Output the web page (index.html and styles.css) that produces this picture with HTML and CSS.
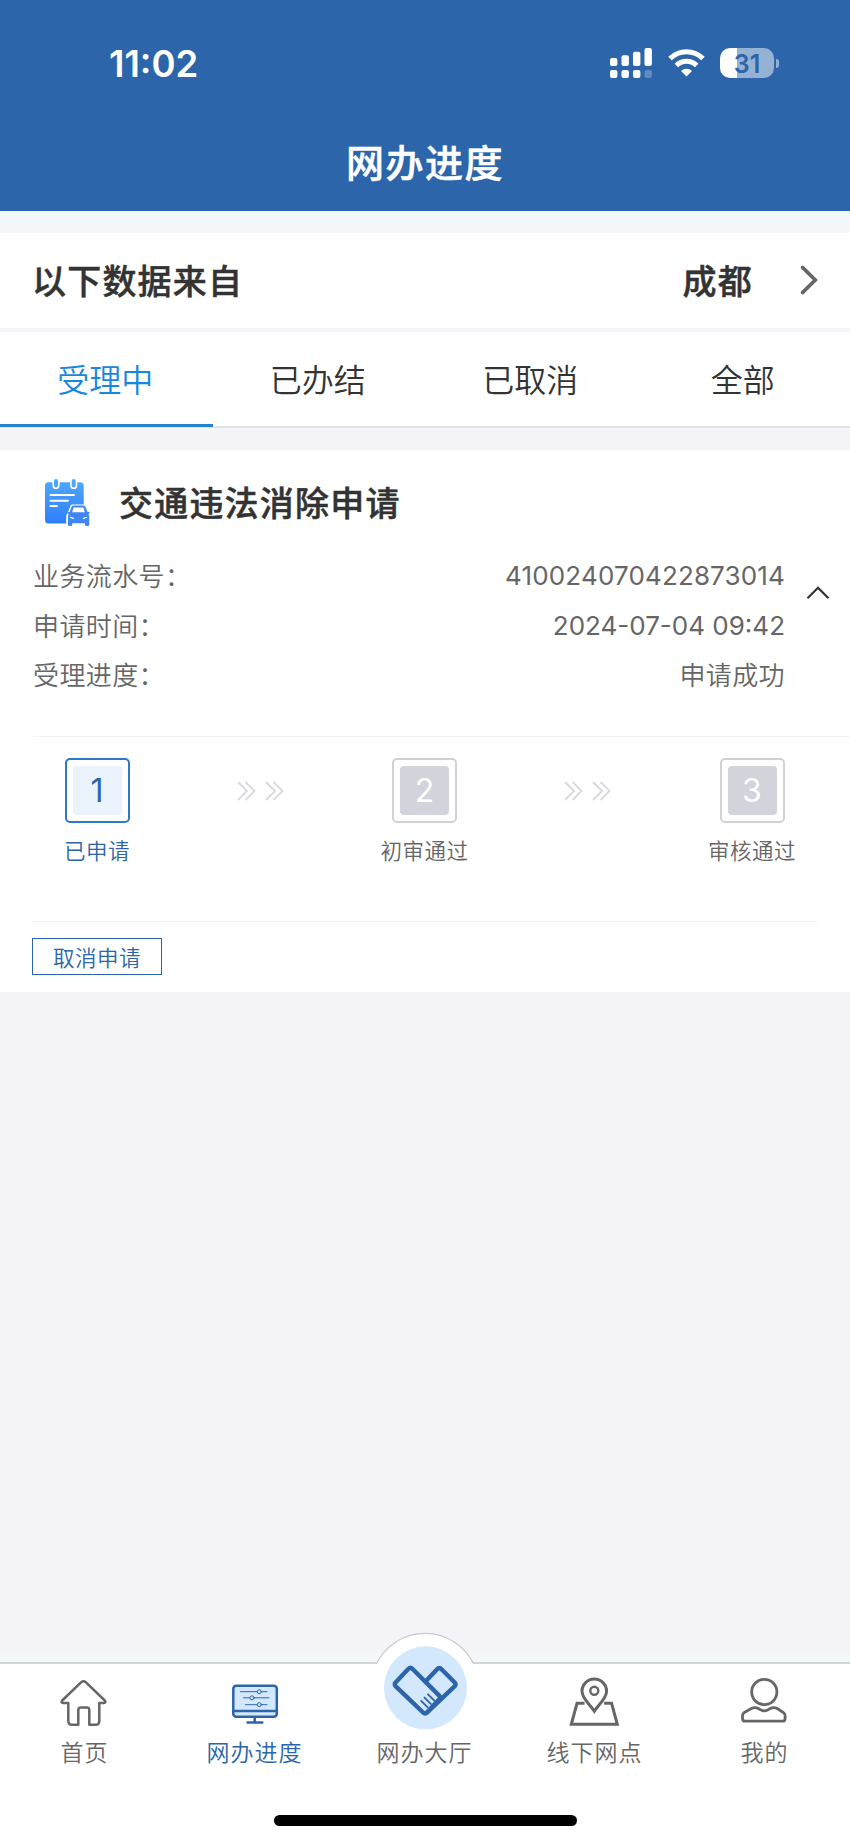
FILE: index.html
```html
<!DOCTYPE html>
<html lang="zh-CN">

<head>
    <meta charset="UTF-8">
    <meta name="viewport" content="width=device-width, initial-scale=1.0">
    <title>网办进度</title>
    <link rel="stylesheet" href="styles.css">
</head>

<body>
    <div class="app">
        <header class="header">
            <div class="status-bar">
                <span class="time">11:02</span>
                <div class="status-icons">
                    <svg class="signal" width="43" height="30" viewBox="0 0 43 30" fill="#fff">
                        <rect x="0" y="10" width="7.4" height="8" rx="2" />
                        <rect x="11.5" y="7.3" width="7.4" height="10.7" rx="2" />
                        <rect x="23" y="3.7" width="7.4" height="14.3" rx="2" />
                        <rect x="34.5" y="0" width="7.4" height="18" rx="2" />
                        <rect x="0" y="22" width="7.4" height="8" rx="2" />
                        <rect x="11.5" y="22" width="7.4" height="8" rx="2" />
                        <rect x="23" y="22" width="7.4" height="8" rx="2" />
                        <rect x="34.5" y="22" width="7.4" height="8" rx="2" opacity=".25" />
                    </svg>
                    <svg class="wifi" width="37" height="30" viewBox="0 0 37 30">
                        <g fill="none" stroke="#fff" stroke-width="5">
                            <path d="M2 10.6a23.4 23.4 0 0 1 33 0" />
                            <path d="M8.3 17.4a14.4 14.4 0 0 1 20.4 0" />
                        </g>
                        <path d="M13 22.9a8 8 0 0 1 11 0l-5.5 5.5z" fill="#fff" />
                    </svg>
                    <div class="battery"><span>31</span></div>
                    <div class="battery-tip"></div>
                </div>
            </div>
            <h1 class="page-title">网办进度</h1>
        </header>

        <div class="source">
            <span>以下数据来自</span>
            <span class="city">成都</span>
            <svg width="20" height="32" viewBox="0 0 20 32" fill="none" stroke="#666" stroke-width="3.6" stroke-linecap="round">
                <path d="M3.500 3.400L16.300 16 3.500 28.600" />
            </svg>
        </div>

        <nav class="tabs">
            <div class="tab active">受理中</div>
            <div class="tab">已办结</div>
            <div class="tab">已取消</div>
            <div class="tab">全部</div>
        </nav>

        <main class="content">
            <section class="card">
                <div class="card-title">
                    <svg width="56" height="56" viewBox="0 0 56 56">
                        <defs>
                            <linearGradient id="doc" x1="0" y1="0" x2="0" y2="1">
                                <stop offset="0" stop-color="#4ea6fb" />
                                <stop offset="1" stop-color="#2f7dfa" />
                            </linearGradient>
                        </defs>
                        <rect x="5" y="8.3" width="38.7" height="41.2" rx="3.5" fill="url(#doc)" />
                        <g fill="#4ea6fb" stroke="#fff" stroke-width="1.6">
                            <rect x="13.2" y="4.2" width="5.6" height="10" rx="2.8" />
                            <rect x="30.9" y="4.2" width="5.6" height="10" rx="2.8" />
                        </g>
                        <path d="M10.5 21H34M10.5 26.7H28M10.5 32H17" stroke="#fff" stroke-width="2" stroke-linecap="round" />
                        <path d="M32 31.800h13l3.500 7 1.500 3v9.700H27.500v-9.700l1.500-3z" fill="#fff" stroke="#fff" stroke-width="2.600" stroke-linejoin="round" />
                        <path d="M31.500 33q.5-1.500 2-1.500h10q1.500 0 2 1.500l2 5 1.700-.3.500 1.500-1.200.9.700 2.200v8.500q0 1.200-1.200 1.200h-1.800q-1.200 0-1.200-1.200v-1.500H32.200v1.500q0 1.200-1.200 1.200h-1.800q-1.200 0-1.200-1.200v-8.500l.7-2.200-1.200-.9.500-1.500 1.700.3z" fill="#3d86f5" />
                        <path d="M33.600 33.600h9.800l1.500 4.600H32.100z" fill="#fff" />
                        <path d="M30.500 43.400l2.800.9M46.500 43.400l-2.800.9" stroke="#fff" stroke-width="1.400" stroke-linecap="round" />
                    </svg>
                    <h2>交通违法消除申请</h2>
                </div>

                <div class="detail">
                    <dl class="info">
                        <dt>业务流水号：</dt>
                        <dd class="number">410024070422873014</dd>
                        <dt>申请时间：</dt>
                        <dd class="date">2024-07-04 09:42</dd>
                        <dt>受理进度：</dt>
                        <dd>申请成功</dd>
                    </dl>
                    <svg class="caret" width="24" height="16" viewBox="0 0 24 16" fill="none" stroke="#333" stroke-width="2.200">
                        <path d="M1.500 13.300L12 2.800l10.500 10.500" />
                    </svg>
                </div>

                <div class="steps">
                    <div class="step done">
                        <div class="step-box"><span>1</span></div>
                        <p>已申请</p>
                    </div>
                    <svg class="arrows" width="48" height="20" viewBox="0 0 48 20">
                        <path d="M1 1l9 9-9 9M8.500 1l9 9-9 9M29 1l9 9-9 9M36.500 1l9 9-9 9" />
                    </svg>
                    <div class="step">
                        <div class="step-box"><span>2</span></div>
                        <p>初审通过</p>
                    </div>
                    <svg class="arrows" width="48" height="20" viewBox="0 0 48 20">
                        <path d="M1 1l9 9-9 9M8.500 1l9 9-9 9M29 1l9 9-9 9M36.500 1l9 9-9 9" />
                    </svg>
                    <div class="step">
                        <div class="step-box"><span>3</span></div>
                        <p>审核通过</p>
                    </div>
                </div>

                <div class="actions">
                    <button class="cancel">取消申请</button>
                </div>
            </section>
        </main>

        <footer class="tabbar">
            <div class="nav">
                <a class="nav-item">
                    <svg width="60" height="60" viewBox="0 0 60 60" fill="none" stroke="#666" stroke-width="2.500" stroke-linejoin="round">
                        <path d="M26.300 8.200q2.200-2 4.400 0L49.800 26.500q1.600 2.300-1 2.400h-4.500V47q0 3.800-3.800 3.800h-6.200V36q0-2.600-2.600-2.600h-5.800q-2.600 0-2.600 2.600v14.800h-6.200q-3.800 0-3.800-3.800V28.900H8.200q-2.600-.1-1-2.400z" />
                    </svg>
                    <span>首页</span>
                </a>
                <a class="nav-item current">
                    <svg width="60" height="60" viewBox="0 0 60 60" fill="none" stroke="#2c65a9" stroke-width="2.500" stroke-linecap="round">
                        <rect x="8.300" y="11.800" width="43.500" height="31" rx="3" fill="#d4e8fc" />
                        <path d="M8.300 37h43.500M29.700 43v5M22.500 48.600h14.800" />
                        <g stroke-width="1">
                            <path d="M15.500 17.700h26.500M18.500 23.800h25.500M20.500 30.700h21.500" />
                            <g fill="#d4e8fc">
                                <circle cx="34.300" cy="17.700" r="2" />
                                <circle cx="27" cy="23.800" r="2" />
                                <circle cx="34.300" cy="30.700" r="2" />
                            </g>
                        </g>
                    </svg>
                    <span>网办进度</span>
                </a>
                <a class="nav-item">
                    <svg class="bump" width="110" height="110" viewBox="0 0 110 110">
                        <path d="M6.300 34.500V33A54 54 0 0 1 103.700 33v1.500z" fill="#fff" />
                        <path d="M6.300 33A54 54 0 0 1 103.700 33" fill="none" stroke="#c6c9cb" stroke-width="1.200" />
                        <circle cx="55.500" cy="56.800" r="41.500" fill="#d4e8fd" />
                        <g fill="none" stroke="#2c65a9" stroke-linejoin="round" stroke-linecap="round">
                            <path d="M38.200 38q2.200-2.200 4.400 0L69 64.400q2 2 0 4L57.200 81.300q-2.200 2.200-4.400 0L25.800 55.400q-2.200-2.100 0-4.200z" stroke-width="4.400" />
                            <path d="M56 50l11.100-11.800q2.200-2.100 4.400 0l13 13q2 2.100 0 4.200L57.200 81.300" stroke-width="4.400" />
                            <path d="M58 63.300l6.300 6.300M54.500 66.600l6.300 6.300M51.200 69.800l6.300 6.300" stroke-width="1.900" />
                        </g>
                    </svg>
                    <span>网办大厅</span>
                </a>
                <a class="nav-item">
                    <svg width="60" height="60" viewBox="0 0 60 60" fill="none" stroke="#666" stroke-width="3">
                        <path d="M19.500 29.300H12L6.300 50.300h46L46.600 29.300h-7.500" />
                        <path d="M29.300 37.300C25 30.500 17 24.500 17 17.300a12.300 12.300 0 0 1 24.600 0C41.600 24.500 33.600 30.500 29.300 37.300z" />
                        <circle cx="29.300" cy="16.700" r="4" stroke-width="2.400" />
                    </svg>
                    <span>线下网点</span>
                </a>
                <a class="nav-item">
                    <svg width="60" height="60" viewBox="0 0 60 60" fill="none" stroke="#666" stroke-width="2.800">
                        <circle cx="29.300" cy="18" r="12.600" />
                        <path d="M10.300 47.200q-2.800 0-2.800-2.800v-2.600q0-2.200 1.800-3.300l7.500-4.200q3.500-1.600 6.500.2l2.800 1.600q3.200 1.500 6.400 0l2.800-1.600q3-1.800 6.500-.2l6.500 4.200q1.800 1.100 1.800 3.300v2.600q0 2.800-2.800 2.800z" />
                    </svg>
                    <span>我的</span>
                </a>
            </div>
            <div class="home-indicator"></div>
        </footer>
    </div>
</body>

</html>
```
FILE: styles.css
```css
* {
    box-sizing: border-box;
}

body {
    margin: 0;
    font-family: "Noto Sans CJK SC", sans-serif;
    font-weight: 350;
    color: #333;
}

h1,
h2,
p,
dl,
dd {
    margin: 0;
}

svg {
    display: block;
    flex-shrink: 0;
}

.app {
    display: flex;
    flex-direction: column;
    width: 850px;
    height: 1843px;
    background-color: #f3f3f8;
}

/* header */
.header {
    height: 211px;
    background-color: #2c65a9;
    color: #fff;
}

.status-bar {
    display: flex;
    justify-content: space-between;
    align-items: center;
    height: 126px;
    padding: 0 71px 0 109px;
}

.time {
    margin-top: 1px;
    font: 600 36.500px/44px Inter, sans-serif;
}

.status-icons {
    display: flex;
    align-items: center;
}

.wifi {
    margin: 0 15px 0 15px;
}

.battery {
    width: 54px;
    height: 30px;
    border-radius: 10px;
    background: linear-gradient(to right, #fff 17px, #95b2d4 17px);
    color: #2c65a9;
    font: 600 25px/32px Inter, sans-serif;
    text-align: center;
}

.battery-tip {
    width: 3px;
    height: 9px;
    margin-left: 2px;
    border-radius: 0 5px 5px 0;
    background-color: #95b2d4;
}

.page-title {
    font-size: 38px;
    font-weight: 500;
    line-height: 70px;
    letter-spacing: 1.500px;
    text-align: center;
    -webkit-text-stroke: .5px;
}

/* data source row */
.source {
    display: flex;
    align-items: center;
    height: 121px;
    padding: 0 31px 2px 32px;
    border-top: 22px solid #f4f7f9;
    border-bottom: 4px solid #f4f5f9;
    background-color: #fff;
    font-size: 34px;
    font-weight: 500;
    line-height: 50px;
    letter-spacing: 1.200px;
    -webkit-text-stroke: .5px;
}

.city {
    margin-left: auto;
    margin-right: 46px;
}

/* tabs */
.tabs {
    display: flex;
    height: 96px;
    border-bottom: 2px solid #e2e3e6;
    background-color: #fff;
}

.tab {
    flex: 1;
    height: 95px;
    padding-right: 2px;
    font-size: 32px;
    line-height: 93px;
    text-align: center;
}

.tab.active {
    border-bottom: 3px solid #2680cb;
    color: #1688df;
}

/* card */
.content {
    flex: 1;
    padding-top: 22px;
}

.card {
    height: 542px;
    background-color: #fff;
}

.card-title {
    display: flex;
    align-items: center;
    gap: 23px;
    height: 102px;
    padding: 2px 0 0 40px;
}

.card-title h2 {
    font-size: 34px;
    font-weight: 500;
    line-height: 50px;
    letter-spacing: 1.200px;
    -webkit-text-stroke: .5px;
}

.detail {
    display: flex;
    height: 184px;
    padding: 0 19px 0 33px;
}

.info {
    display: grid;
    grid-template-columns: auto 1fr;
    grid-auto-rows: 49.700px;
    width: 752px;
    color: #666;
    font-size: 26px;
    line-height: 45px;
    letter-spacing: .4px;
}

.info dd {
    text-align: right;
}

.info .number,
.info .date {
    font-family: Inter, sans-serif;
    font-weight: 400;
    line-height: 48px;
    letter-spacing: .150px;
}

.info .date {
    letter-spacing: 0;
}

.caret {
    margin: 33px 0 0 21px;
}

.steps {
    display: flex;
    justify-content: space-between;
    height: 185px;
    margin-left: 33px;
    padding: 21px 50px 0 16px;
    border-top: 1px solid #f3f3f5;
}

.step {
    display: flex;
    flex-direction: column;
    align-items: center;
    width: 96px;
    color: #666;
}

.step-box {
    width: 65px;
    height: 65px;
    padding: 6px;
    border: 2px solid #d0d2d6;
    border-radius: 5px;
}

.step-box span {
    display: block;
    border-radius: 4px;
    background-color: #d1d4da;
    color: #fff;
    font: 32px/49px Inter, sans-serif;
    text-align: center;
}

.step p {
    margin-top: 11px;
    font-size: 21.500px;
    line-height: 32px;
    letter-spacing: .5px;
    white-space: nowrap;
}

.done {
    color: #2c65a9;
}

.done .step-box {
    border-color: #2d78c8;
}

.done .step-box span {
    background-color: #ebf3fd;
    color: #2c65a9;
}

.arrows {
    margin-top: 23px;
    fill: none;
    stroke: #d8d9dc;
    stroke-width: 1.800;
}

.actions {
    margin: 0 32px;
    padding-top: 16px;
    border-top: 1px solid #f3f3f5;
}

.cancel {
    display: block;
    width: 130px;
    height: 37px;
    padding: 0;
    border: 1px solid #2c65a9;
    background-color: #fff;
    color: #2c65a9;
    font-family: inherit;
    font-size: 21.500px;
    font-weight: 350;
    line-height: 33px;
    letter-spacing: .5px;
}

/* bottom navigation */
.tabbar {
    height: 191px;
    border-top: 10px solid #f4f7f9;
    background-color: #fff;
}

.nav {
    display: flex;
    height: 153px;
    border-top: 2px solid #d0d5d6;
}

.nav-item {
    position: relative;
    display: flex;
    flex: 1;
    flex-direction: column;
    align-items: center;
    justify-content: flex-end;
    padding: 0 1px 46px 0;
    color: #666;
    font-size: 23px;
    line-height: 35px;
    letter-spacing: 1px;
}

.nav-item.current {
    color: #2c65a9;
}

/* raised middle button, sticks out over the bar's top edge */
.bump {
    position: absolute;
    top: -33px;
    left: 30px;
}

.home-indicator {
    width: 303px;
    height: 11px;
    margin: 0 auto;
    border-radius: 6px;
    background-color: #000;
}
```
